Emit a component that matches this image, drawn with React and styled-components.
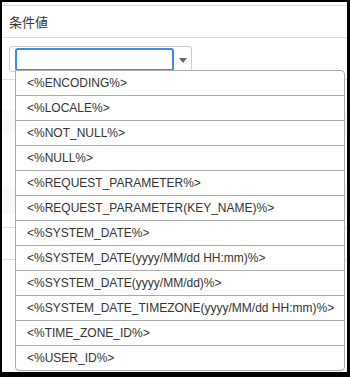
import styled, { createGlobalStyle } from "styled-components";

const GlobalStyle = createGlobalStyle`
  html, body {
    margin: 0;
    background: #000;
  }
  body {
    padding: 2px 3px 5px 2px;
    font-family: "Liberation Sans", "Noto Sans CJK JP", Arial, sans-serif;
  }
`;

const Page = styled.div`
  position: relative;
  width: 345px;
  height: 370px;
  background: #fff;
  overflow: hidden;
  padding-top: 3px;
  box-sizing: border-box;
`;

const Header = styled.div`
  height: 33px;
  border-top: 1px solid #ddd;
  border-bottom: 1px solid #ddd;
  box-sizing: border-box;
  display: flex;
  align-items: center;
  padding-left: 7px;
  font-size: 13px;
  color: #333;
  font-family: "Noto Sans CJK JP", "Liberation Sans", sans-serif;
`;

const Body = styled.div`
  padding: 8px 7px 7px;
  border-bottom: 1px solid #ddd;
`;

const SelectBox = styled.div`
  width: 183px;
  height: 26px;
  box-sizing: border-box;
  border: 1px solid #ccc;
  border-radius: 3px;
  display: flex;
  align-items: center;
  padding-left: 5px;
`;

const Input = styled.div`
  width: 159px;
  height: 23px;
  box-sizing: border-box;
  border: 2px solid #3b8af0;
  border-radius: 3px;
`;

const Caret = styled.span`
  margin-left: 5px;
  margin-top: 2px;
  width: 0;
  height: 0;
  border-left: 4px solid transparent;
  border-right: 4px solid transparent;
  border-top: 5px solid #666;
`;

const Stripe = styled.div`
  height: ${(p) => p.h}px;
  background: ${(p) => (p.shade ? "#f9f9f9" : "#fff")};
  border-bottom: ${(p) => (p.line ? "1px solid #ddd" : "none")};
  box-sizing: border-box;
`;

const Menu = styled.ul`
  position: absolute;
  left: 13px;
  top: 68px;
  width: 330px;
  margin: 0;
  padding: 0;
  list-style: none;
  background: #fff;
  border: 1px solid #aaa;
  border-radius: 0 4px 4px 4px;
  box-sizing: border-box;
`;

const Item = styled.li`
  height: 25px;
  box-sizing: border-box;
  padding-left: 11px;
  display: flex;
  align-items: center;
  font-size: 12px;
  color: #333;
  white-space: nowrap;
  &:not(:last-child) {
    border-bottom: 1px solid #aaa;
  }
  &:last-child {
    height: 24px;
  }
`;

const options = [
  "<%ENCODING%>",
  "<%LOCALE%>",
  "<%NOT_NULL%>",
  "<%NULL%>",
  "<%REQUEST_PARAMETER%>",
  "<%REQUEST_PARAMETER(KEY_NAME)%>",
  "<%SYSTEM_DATE%>",
  "<%SYSTEM_DATE(yyyy/MM/dd HH:mm)%>",
  "<%SYSTEM_DATE(yyyy/MM/dd)%>",
  "<%SYSTEM_DATE_TIMEZONE(yyyy/MM/dd HH:mm)%>",
  "<%TIME_ZONE_ID%>",
  "<%USER_ID%>",
];

export default function App() {
  return (
    <>
      <GlobalStyle />
      <Page>
        <Header>条件値</Header>
        <Body>
          <SelectBox>
            <Input />
            <Caret />
          </SelectBox>
        </Body>
        <Stripe h={30} />
        <Stripe h={25} shade />
        <Stripe h={50} />
        <Stripe h={29} shade />
        <Stripe h={14} line />
        <Stripe h={32} line />
        <Menu>
          {options.map((o) => (
            <Item key={o}>{o}</Item>
          ))}
        </Menu>
      </Page>
    </>
  );
}
